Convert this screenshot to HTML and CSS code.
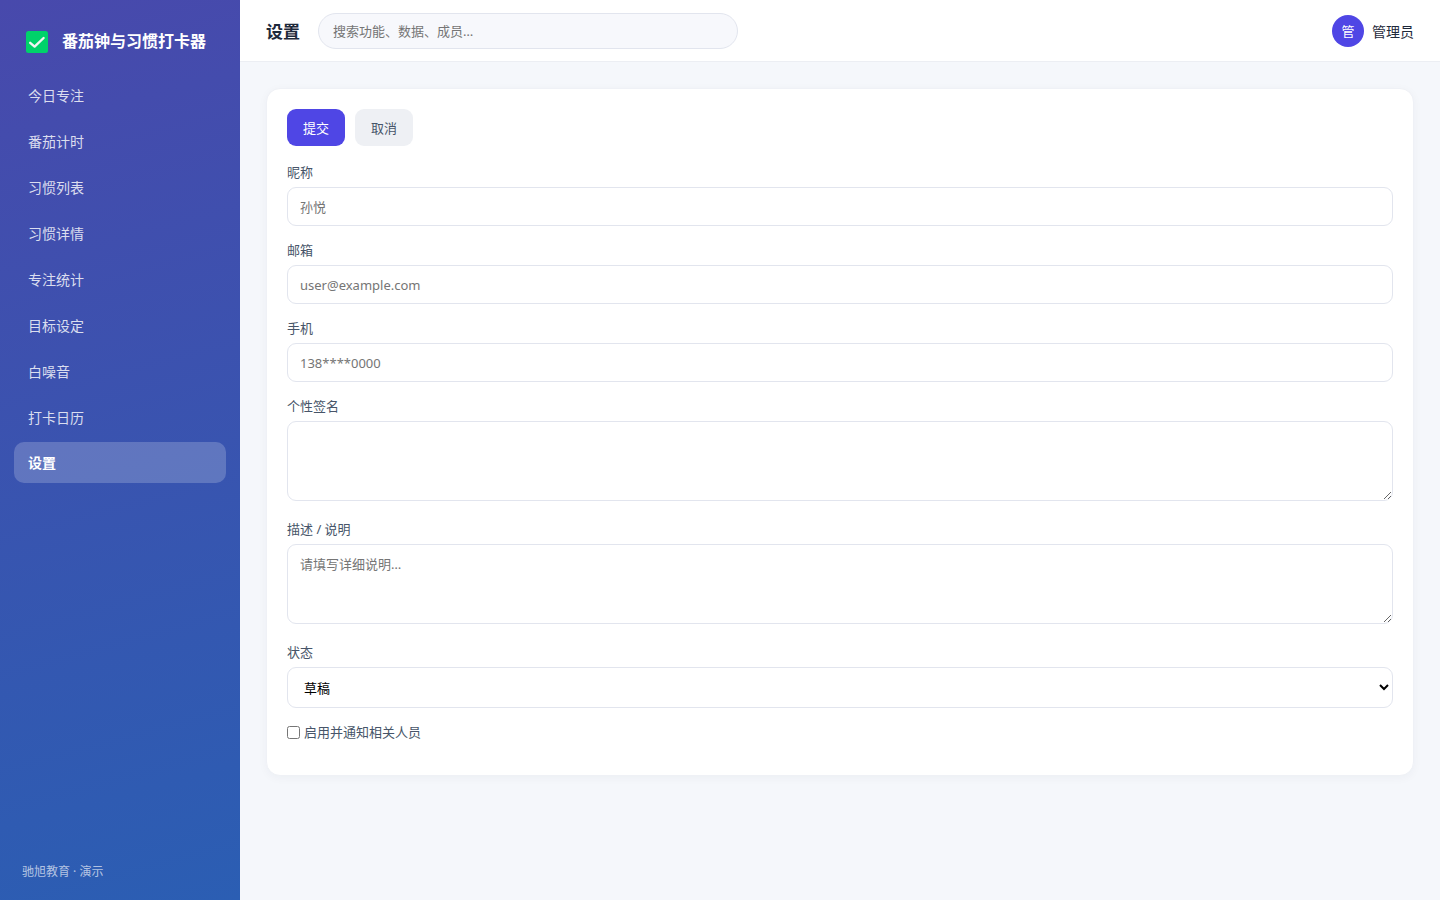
FILE: index.html
```html
<!DOCTYPE html>
<html lang="zh-CN">
<head>
<meta charset="utf-8">
<meta name="viewport" content="width=device-width, initial-scale=1">
<title>设置 - 番茄钟与习惯打卡器</title>
<link rel="stylesheet" href="styles.css">
</head>
<body>
<div class="app">
  <aside class="sidebar">
    <div class="brand">
      <svg class="brand-icon" viewBox="0 0 22 24" aria-hidden="true">
        <rect y="2" width="22" height="22" rx="2.5" fill="#00d26a"/>
        <path d="M4.2 13.8 8.6 17.6 17.6 9" fill="none" stroke="#f4f4f4" stroke-width="2.4" stroke-linecap="round" stroke-linejoin="round"/>
      </svg>
      <span>番茄钟与习惯打卡器</span>
    </div>
    <nav class="nav">
      <a class="nav-item" href="#">今日专注</a>
      <a class="nav-item" href="#">番茄计时</a>
      <a class="nav-item" href="#">习惯列表</a>
      <a class="nav-item" href="#">习惯详情</a>
      <a class="nav-item" href="#">专注统计</a>
      <a class="nav-item" href="#">目标设定</a>
      <a class="nav-item" href="#">白噪音</a>
      <a class="nav-item" href="#">打卡日历</a>
      <a class="nav-item active" href="#" aria-current="page">设置</a>
    </nav>
    <div class="sidebar-foot">驰旭教育 · 演示</div>
  </aside>
  <div class="main">
    <header class="topbar">
      <h1 class="page-title">设置</h1>
      <input class="search" type="search" placeholder="搜索功能、数据、成员…" aria-label="搜索">
      <div class="user">
        <span class="avatar">管</span>
        <span>管理员</span>
      </div>
    </header>
    <main class="content">
      <form class="card">
        <div class="actions">
          <button class="btn btn-primary" type="submit">提交</button>
          <button class="btn" type="button">取消</button>
        </div>
        <div class="field">
          <label for="nick">昵称</label>
          <input class="control" id="nick" type="text" placeholder="孙悦">
        </div>
        <div class="field">
          <label for="email">邮箱</label>
          <input class="control" id="email" type="email" placeholder="user@example.com">
        </div>
        <div class="field">
          <label for="phone">手机</label>
          <input class="control" id="phone" type="tel" placeholder="138****0000">
        </div>
        <div class="field field-area">
          <label for="sign">个性签名</label>
          <textarea class="control" id="sign"></textarea>
        </div>
        <div class="field field-area">
          <label for="desc">描述 / 说明</label>
          <textarea class="control" id="desc" placeholder="请填写详细说明…"></textarea>
        </div>
        <div class="field">
          <label for="status">状态</label>
          <select class="control" id="status"><option>草稿</option><option>已发布</option></select>
        </div>
        <div class="check">
          <input type="checkbox" id="notify">
          <label for="notify">启用并通知相关人员</label>
        </div>
      </form>
    </main>
  </div>
</div>
</body>
</html>
```

FILE: styles.css
```css
* {
  box-sizing: border-box;
}

body {
  margin: 0;
  font-family: "Noto Sans", "Noto Sans CJK SC", sans-serif;
  font-size: 14px;
  color: #1e293b;
  background: #f5f7fb;
}

input,
textarea,
select,
button {
  font-family: inherit;
}

.app {
  display: flex;
  min-height: 100vh;
}

.sidebar {
  display: flex;
  flex-direction: column;
  flex: 0 0 240px;
  padding: 22px 14px 18px;
  color: #fff;
  background: linear-gradient(165deg, #4849ac, #2b5eb3);
}

.brand {
  display: flex;
  align-items: center;
  gap: 14px;
  padding: 0 12px;
  margin-bottom: 14px;
  font-size: 16px;
  font-weight: 700;
  line-height: 38px;
  white-space: nowrap;
}

.brand-icon {
  width: 22px;
  height: 24px;
}

.nav {
  display: flex;
  flex-direction: column;
  gap: 5px;
}

.nav-item {
  padding: 11px 14px 9px;
  border-radius: 10px;
  line-height: 21px;
  color: rgba(255, 255, 255, 0.82);
  text-decoration: none;
}

.nav-item.active {
  padding: 10px 14px;
  color: #fff;
  font-weight: 700;
  background: rgba(255, 255, 255, 0.2);
}

.sidebar-foot {
  margin-top: auto;
  padding: 0 8px;
  font-size: 12px;
  line-height: 20px;
  color: rgba(255, 255, 255, 0.65);
}

.main {
  display: flex;
  flex-direction: column;
  flex: 1;
  min-width: 0;
}

.topbar {
  display: flex;
  align-items: center;
  gap: 18px;
  padding: 0 26px;
  min-height: 62px;
  background: #fff;
  border-bottom: 1px solid #eceef3;
}

.page-title {
  margin: 0;
  font-size: 17px;
  font-weight: 700;
  white-space: nowrap;
}

.search {
  flex: 0 1 420px;
  min-width: 0;
  height: 36px;
  padding: 0 14px;
  border: 1px solid #e2e5ee;
  border-radius: 18px;
  font-size: 13px;
  background: #f7f8fc;
  appearance: none;
}

.user {
  display: flex;
  align-items: center;
  gap: 8px;
  margin-left: auto;
  white-space: nowrap;
}

.avatar {
  display: grid;
  place-items: center;
  width: 32px;
  height: 32px;
  border-radius: 50%;
  font-size: 13px;
  color: #fff;
  background: #4f46e5;
}

.content {
  padding: 26px;
}

.card {
  padding: 20px 20px 32px;
  border: 1px solid #eff1f6;
  border-radius: 14px;
  background: #fff;
  box-shadow: 0 2px 10px rgba(30, 41, 80, 0.04);
}

.actions {
  display: flex;
  gap: 10px;
  margin-bottom: 16px;
}

.btn {
  height: 37px;
  padding: 0 16px;
  border: 0;
  border-radius: 9px;
  font-size: 13px;
  color: #475569;
  background: #eef0f4;
}

.btn-primary {
  color: #fff;
  background: #4f46e5;
}

.field {
  display: flex;
  flex-direction: column;
  gap: 4px;
  margin-bottom: 14px;
}

.field-area {
  margin-bottom: 18px;
}

.field label,
.check label {
  font-size: 13px;
  line-height: 21px;
  color: #475569;
}

.control {
  width: 100%;
  height: 39px;
  padding: 0 12px;
  border: 1px solid #e2e5ee;
  border-radius: 9px;
  font-size: 13px;
  color: #000;
  background: #fff;
}

textarea.control {
  display: block;
  height: 80px;
  padding: 9px 12px;
  resize: vertical;
}

select.control {
  height: 41px;
}

.check {
  display: flex;
  align-items: center;
  gap: 4px;
}

.check input {
  width: 13px;
  height: 13px;
  margin: 0;
}
```
